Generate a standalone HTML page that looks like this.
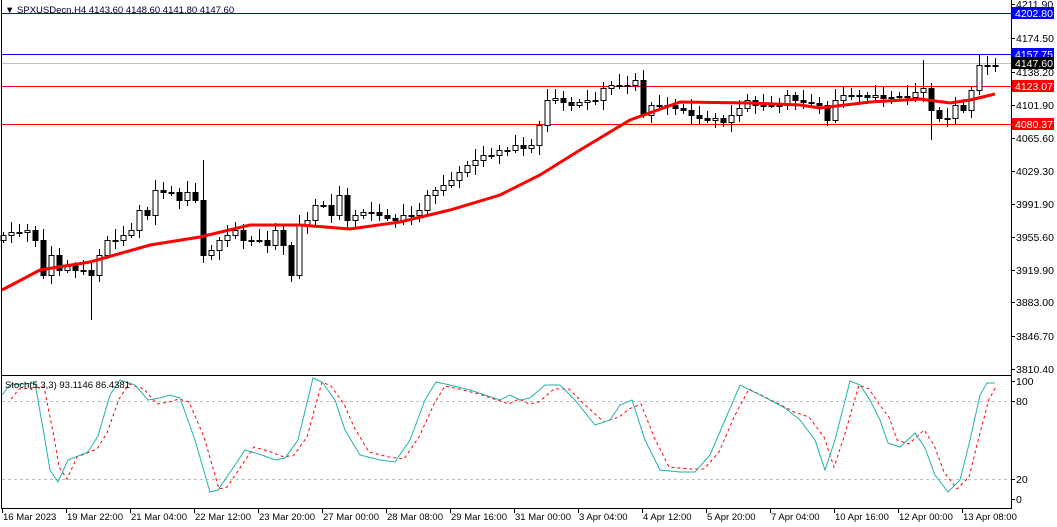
<!DOCTYPE html>
<html><head><meta charset="utf-8"><style>
body{margin:0;background:#fff;width:1057px;height:527px;overflow:hidden}
svg{display:block;font-family:"Liberation Sans",sans-serif;font-size:10.5px}
.sm{font-size:9.5px}
</style></head><body>
<svg id="s" width="1057" height="527" xmlns="http://www.w3.org/2000/svg">
<rect width="1057" height="527" fill="#fff"/>
<g id="hl">
<line x1="2" y1="13.5" x2="1011" y2="13.5" stroke="#0000ff"/>
<line x1="2" y1="54.5" x2="1011" y2="54.5" stroke="#0000ff"/>
<line x1="2" y1="63.5" x2="1011" y2="63.5" stroke="#c0c0c0"/>
<line x1="2" y1="86.5" x2="1011" y2="86.5" stroke="#ff0000"/>
<line x1="2" y1="124.5" x2="1011" y2="124.5" stroke="#ff0000"/>
<line x1="2" y1="401.5" x2="1011" y2="401.5" stroke="#c0c0c0" stroke-dasharray="3,3"/>
<line x1="2" y1="479.5" x2="1011" y2="479.5" stroke="#c0c0c0" stroke-dasharray="3,3"/>
</g>
<g id="c"></g>
<polyline id="ma" fill="none" stroke="#ff0000" stroke-width="3"/>
<polyline id="sig" fill="none" stroke="#ff0000" stroke-width="1" stroke-dasharray="3,3"/>
<polyline id="st" fill="none" stroke="#20b2aa" stroke-width="1"/>
<line x1="1.5" y1="0" x2="1.5" y2="508" stroke="#000"/>
<line x1="1011.5" y1="0" x2="1011.5" y2="508" stroke="#000"/>
<line x1="1" y1="375.5" x2="1012" y2="375.5" stroke="#000"/>
<line x1="1" y1="508.5" x2="1012" y2="508.5" stroke="#000"/>
<text x="5" y="13" fill="#000" class="sm">▼ SPXUSDecn.H4  4143.60 4148.60 4141.80 4147.60</text>
<text x="5" y="388" fill="#000" class="sm">Stoch(5,3,3) 93.1146 86.4381</text>
<g id="ax" fill="#000"></g>
<g id="tl" fill="#000" class="sm"></g>
</svg>
<script>
(function(){
var NS="http://www.w3.org/2000/svg";
function el(t,a,p,txt){var e=document.createElementNS(NS,t);for(var k in a)e.setAttribute(k,a[k]);if(txt)e.textContent=txt;(p||document.getElementById('s')).appendChild(e);return e;}
var closes=[235,232,232,230,240,275,255,270,265,270,270,275,255,240,240,235,230,210,215,190,192,192,200,192,200,255,250,240,235,230,240,240,240,245,230,245,275,225,220,205,205,215,195,220,215,212,212,215,218,220,215,215,210,195,190,185,180,172,165,160,155,155,150,150,145,148,145,125,100,98,102,105,102,100,100,88,85,85,85,80,115,105,105,105,108,110,115,118,120,118,122,115,108,100,105,105,105,105,95,100,102,103,105,120,100,95,95,95,97,95,98,97,96,97,92,88,110,118,118,105,110,90,65,65,65];
var g=document.getElementById('c');var prev=240;
for(var i=0;i<closes.length;i++){var x=3+i*8,o=prev,c=closes[i];var bt=Math.min(o,c),bb=Math.max(o,c);
var hi=bt-3-((i*7)%9),lo=bb+3+((i*5)%8);
if(i==25){hi=160;}if(i==80){hi=70;}if(i==11){lo=320;}if(i==115){hi=60;}if(i==116){lo=140}
el('line',{x1:x+.5,y1:hi,x2:x+.5,y2:lo,stroke:'#000'},g);
var h=Math.max(bb-bt,1);
if(c<o)el('rect',{x:x-2,y:bt+.5,width:5,height:h,fill:'#fff',stroke:'#000'},g);
else el('rect',{x:x-2.5,y:bt,width:6,height:h+1,fill:'#000'},g);
prev=c;}
var ma=[[2,290],[40,270],[90,262],[150,245],[200,237],[250,225],[300,225],[350,229],[400,222],[450,210],[500,195],[540,175],[580,150],[630,120],[680,102],[750,103],[800,105],[820,108],[870,102],[920,99],[950,103],[970,100],[995,94]];
document.getElementById('ma').setAttribute('points',ma.map(function(p){return p.join(',')}).join(' '));
var st=[[2,395],[10,385],[35,383],[45,440],[50,470],[58,482],[68,460],[88,452],[98,436],[110,395],[120,380],[135,385],[148,400],[160,398],[170,395],[180,398],[195,440],[210,492],[218,490],[235,465],[245,450],[262,455],[275,460],[285,458],[298,440],[313,378],[322,382],[335,400],[345,430],[360,455],[380,460],[395,462],[410,440],[425,400],[436,382],[450,385],[470,390],[485,395],[500,400],[510,395],[520,400],[530,398],[545,385],[560,385],[575,400],[595,425],[610,420],[620,405],[632,400],[645,440],[660,470],[680,472],[695,472],[710,455],[725,420],[740,385],[750,390],[770,400],[785,408],[800,420],[815,440],[825,470],[835,440],[850,381],[860,385],[870,400],[880,420],[888,443],[900,447],[915,433],[925,448],[935,475],[948,492],[960,480],[970,440],[980,395],[987,383],[995,383]];
document.getElementById('st').setAttribute('points',st.map(function(p){return p.join(',')}).join(' '));
document.getElementById('sig').setAttribute('points',st.filter(function(p){return p[0]<=987}).map(function(p){return (p[0]+9)+','+(p[1]+(p[1]<420?4:-3))}).join(' '));
var ax=document.getElementById('ax');
[["4211.90",4],["4174.50",38],["4138.20",72],["4101.90",105],["4065.60",138],["4029.30",171],["3991.90",204],["3955.60",237],["3919.90",270],["3883.00",302],["3846.70",336],["3810.40",369],["100",381],["80",401],["20",479],["0",499]].forEach(function(a){
el('line',{x1:1011,y1:a[1]+.5,x2:1015,y2:a[1]+.5,stroke:'#000'},ax);
el('text',{x:1016,y:a[1]+4},ax,a[0]);});
[["4202.80",13,"#0000ff","#fff"],["4157.75",54,"#0000ff","#fff"],["4147.60",63,"#000","#fff"],["4123.07",86,"#ff0000","#fff"],["4080.37",124,"#ff0000","#fff"]].forEach(function(a){
el('rect',{x:1012,y:a[1]-6,width:42,height:12,fill:a[2]},ax);
el('text',{x:1015,y:a[1]+4,fill:a[3]},ax,a[0]);});
var tl=document.getElementById('tl');
["16 Mar 2023","19 Mar 22:00","21 Mar 04:00","22 Mar 12:00","23 Mar 20:00","27 Mar 00:00","28 Mar 08:00","29 Mar 16:00","31 Mar 00:00","3 Apr 04:00","4 Apr 12:00","5 Apr 20:00","7 Apr 04:00","10 Apr 16:00","12 Apr 00:00","13 Apr 08:00"].forEach(function(t,i){
var x=2+i*64;el('line',{x1:x+.5,y1:508,x2:x+.5,y2:513,stroke:'#000'},tl);
el('text',{x:x+1,y:520},tl,t);});
})();
</script>
</body></html>
